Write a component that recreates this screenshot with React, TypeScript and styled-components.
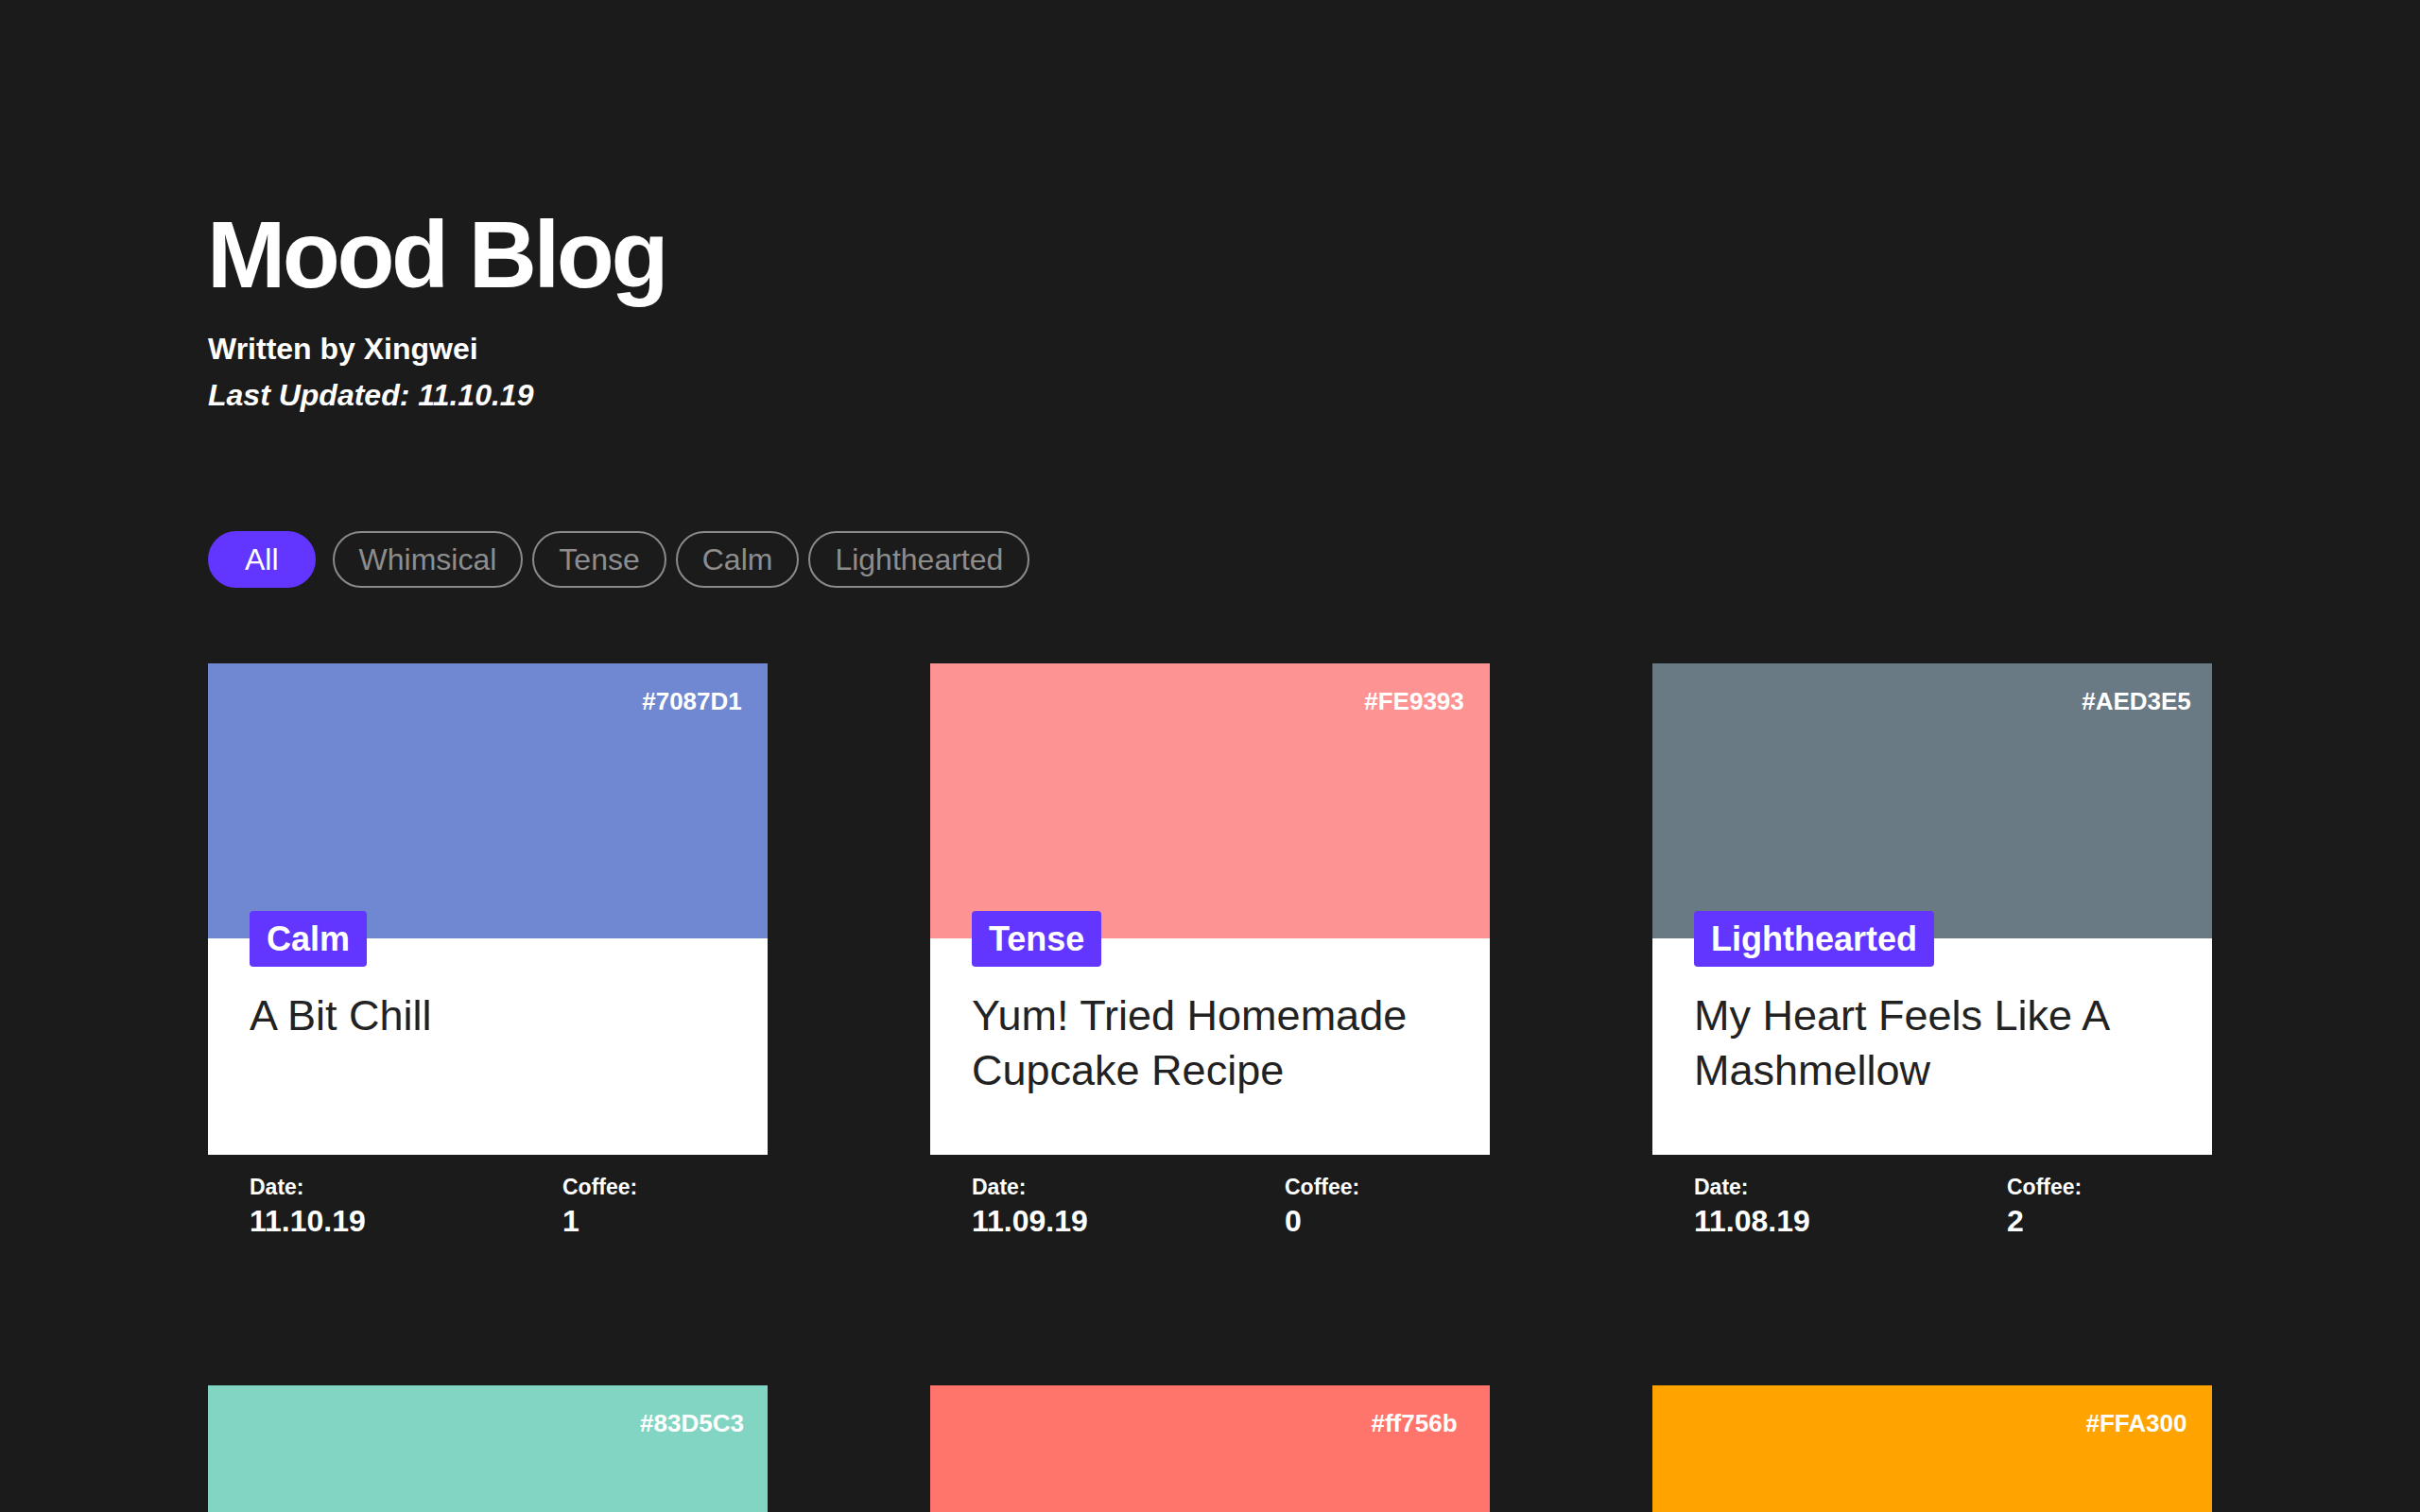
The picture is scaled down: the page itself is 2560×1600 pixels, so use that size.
import React from "react";
import styled, { createGlobalStyle } from "styled-components";

const GlobalStyle = createGlobalStyle`
  html, body {
    margin: 0;
    padding: 0;
    background: #1b1b1b;
  }
  body {
    font-family: "Liberation Sans", Arial, Helvetica, sans-serif;
    color: #ffffff;
    overflow-x: hidden;
  }
  * { box-sizing: border-box; }
`;

const Page = styled.main`
  padding: 219px 220px 120px;
  min-height: 100vh;
  background: #1b1b1b;
`;

const Header = styled.header`
  display: flex;
  flex-direction: column;
`;

const Title = styled.h1`
  margin: 0 0 26px -1px;
  font-size: 100px;
  line-height: 100px;
  font-weight: 700;
  letter-spacing: -3.5px;
  color: #ffffff;
`;

const MetaLine = styled.p<{ $italic?: boolean }>`
  margin: 0;
  font-size: 32px;
  line-height: 49px;
  font-weight: 700;
  font-style: ${(p) => (p.$italic ? "italic" : "normal")};
  color: #ffffff;
`;

const Filters = styled.nav`
  display: flex;
  align-items: center;
  gap: 10px;
  margin-top: 119px;
`;

const Pill = styled.button<{ $active?: boolean }>`
  height: 60px;
  padding: 0 ${(p) => (p.$active ? "37px" : "26px")};
  margin-right: ${(p) => (p.$active ? "8px" : "0")};
  border-radius: 30px;
  border: 2px solid ${(p) => (p.$active ? "#6236ff" : "#8a8a8a")};
  background: ${(p) => (p.$active ? "#6236ff" : "transparent")};
  color: ${(p) => (p.$active ? "#ffffff" : "#8d8d8d")};
  font-family: "Liberation Sans", Arial, Helvetica, sans-serif;
  font-size: 32px;
  line-height: 56px;
  font-weight: 400;
  cursor: pointer;
`;

const Grid = styled.section`
  display: grid;
  grid-template-columns: repeat(3, 1fr);
  column-gap: 172px;
  row-gap: 155px;
  margin-top: 80px;
`;

const Card = styled.article`
  display: flex;
  flex-direction: column;
`;

const ColorBlock = styled.div<{ $color: string }>`
  height: 291px;
  background: ${(p) => p.$color};
  display: flex;
  justify-content: flex-end;
  align-items: flex-start;
  padding-top: 25px;
`;

const Hex = styled.span`
  width: 160px;
  text-align: center;
  font-size: 26px;
  font-weight: 700;
  color: #ffffff;
`;

const Body = styled.div`
  height: 229px;
  background: #ffffff;
  padding: 0 44px;
  display: flex;
  flex-direction: column;
  align-items: flex-start;
`;

const Tag = styled.span`
  margin-top: -29px;
  height: 59px;
  padding: 0 18px;
  border-radius: 4px;
  background: #6236ff;
  color: #ffffff;
  font-size: 36px;
  line-height: 59px;
  font-weight: 700;
`;

const PostTitle = styled.h2`
  margin: 23px 0 0;
  font-size: 45px;
  line-height: 58px;
  font-weight: 400;
  color: #222222;
`;

const Footer = styled.div`
  display: grid;
  grid-template-columns: 331px 1fr;
  padding: 20px 44px 0;
`;

const Stat = styled.div`
  display: flex;
  flex-direction: column;
`;

const StatLabel = styled.span`
  font-size: 23px;
  line-height: 28px;
  font-weight: 700;
  margin-bottom: 3px;
`;

const StatValue = styled.span`
  font-size: 32px;
  line-height: 38px;
  font-weight: 700;
`;

type Post = {
  hex: string;
  color: string;
  mood: string;
  title: string;
  date: string;
  coffee: number;
};

const posts: Post[] = [
  { hex: "#7087D1", color: "#7087d1", mood: "Calm", title: "A Bit Chill", date: "11.10.19", coffee: 1 },
  { hex: "#FE9393", color: "#fe9393", mood: "Tense", title: "Yum! Tried Homemade Cupcake Recipe", date: "11.09.19", coffee: 0 },
  { hex: "#AED3E5", color: "#697a84", mood: "Lighthearted", title: "My Heart Feels Like A Mashmellow", date: "11.08.19", coffee: 2 },
  { hex: "#83D5C3", color: "#83d5c3", mood: "Calm", title: "Quiet Sunday Morning", date: "11.07.19", coffee: 1 },
  { hex: "#ff756b", color: "#ff756b", mood: "Tense", title: "Deadline Week", date: "11.06.19", coffee: 3 },
  { hex: "#FFA300", color: "#ffa300", mood: "Whimsical", title: "Orange Skies", date: "11.05.19", coffee: 1 },
];

const filters = ["All", "Whimsical", "Tense", "Calm", "Lighthearted"];

export default function App() {
  return (
    <>
      <GlobalStyle />
      <Page>
        <Header>
          <Title>Mood Blog</Title>
          <MetaLine>Written by Xingwei</MetaLine>
          <MetaLine $italic>Last Updated: 11.10.19</MetaLine>
        </Header>
        <Filters>
          {filters.map((f, i) => (
            <Pill key={f} $active={i === 0}>
              {f}
            </Pill>
          ))}
        </Filters>
        <Grid>
          {posts.map((p) => (
            <Card key={p.hex}>
              <ColorBlock $color={p.color}>
                <Hex>{p.hex}</Hex>
              </ColorBlock>
              <Body>
                <Tag>{p.mood}</Tag>
                <PostTitle>{p.title}</PostTitle>
              </Body>
              <Footer>
                <Stat>
                  <StatLabel>Date:</StatLabel>
                  <StatValue>{p.date}</StatValue>
                </Stat>
                <Stat>
                  <StatLabel>Coffee:</StatLabel>
                  <StatValue>{p.coffee}</StatValue>
                </Stat>
              </Footer>
            </Card>
          ))}
        </Grid>
      </Page>
    </>
  );
}
